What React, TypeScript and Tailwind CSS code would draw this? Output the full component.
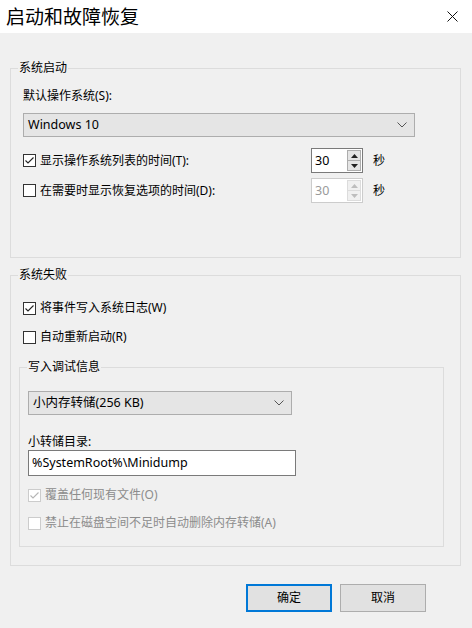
import React from 'react'

const font = { fontFamily: '"Noto Sans", "Noto Sans CJK SC", sans-serif' }

function CheckBox({ checked, disabled, label }: { checked?: boolean; disabled?: boolean; label: string }) {
  return (
    <div className="flex h-4 items-center">
      <div
        className={`flex h-[13px] w-[13px] items-center justify-center border bg-white ${
          disabled ? 'border-[#cccccc]' : 'border-[#333333]'
        }`}
      >
        {checked && (
          <svg width="11" height="11" viewBox="0 0 11 11">
            <polyline
              points="1.5,5.5 4,8 9.5,2.5"
              fill="none"
              stroke={disabled ? '#b5b5b5' : '#222222'}
              strokeWidth="1.1"
            />
          </svg>
        )}
      </div>
      <span className={`ml-[4px] text-[12px] leading-4 ${disabled ? 'text-[#8c8c8c]' : 'text-black'}`}>{label}</span>
    </div>
  )
}

function Select({ value, width }: { value: string; width: string }) {
  return (
    <div className={`flex h-[24px] items-center justify-between border border-[#adadad] bg-[#e5e5e5] pl-[4px] pr-[7px] ${width}`}>
      <span className="text-[12.5px] leading-4 text-black">{value}</span>
      <svg width="10" height="6" viewBox="0 0 10 6">
        <polyline points="0.5,0.5 5,5 9.5,0.5" fill="none" stroke="#555555" strokeWidth="1" />
      </svg>
    </div>
  )
}

function Spin({ disabled }: { disabled?: boolean }) {
  const c = disabled ? '#bdbdbd' : '#222222'
  return (
    <div
      className={`flex h-[25px] w-[52px] items-center justify-between border bg-white pl-[3px] pr-[1px] ${
        disabled ? 'border-[#cccccc] bg-[#f0f0f0]' : 'border-[#7a7a7a]'
      }`}
    >
      <span className={`text-[12.5px] leading-4 ${disabled ? 'text-[#9a9a9a]' : 'text-black'}`}>30</span>
      <div className="flex h-[21px] w-[14px] flex-col">
        <div className={`flex h-[11px] items-center justify-center border ${disabled ? 'border-[#dcdcdc] bg-[#f0f0f0]' : 'border-[#adadad] bg-[#e5e5e5]'}`}>
          <svg width="7" height="4" viewBox="0 0 7 4">
            <polygon points="3.5,0 7,4 0,4" fill={c} />
          </svg>
        </div>
        <div className={`-mt-px flex h-[11px] items-center justify-center border ${disabled ? 'border-[#dcdcdc] bg-[#f0f0f0]' : 'border-[#adadad] bg-[#e5e5e5]'}`}>
          <svg width="7" height="4" viewBox="0 0 7 4">
            <polygon points="0,0 7,0 3.5,4" fill={c} />
          </svg>
        </div>
      </div>
    </div>
  )
}

function TimeRow({ checked, disabled, label }: { checked?: boolean; disabled?: boolean; label: string }) {
  return (
    <div className="flex h-[25px] items-center">
      <div className="w-[288px]">
        <CheckBox checked={checked} label={label} />
      </div>
      <Spin disabled={disabled} />
      <span className="ml-[10px] text-[12px] leading-4 text-black">秒</span>
    </div>
  )
}

export default function App() {
  return (
    <div className="h-[628px] w-[472px] overflow-hidden bg-[#f0f0f0]" style={font}>
      {/* Title bar */}
      <div className="flex h-[33px] items-center justify-between bg-white pl-[6px] pr-[14px]">
        <span className="text-[19px] leading-6 text-black">启动和故障恢复</span>
        <svg width="11" height="11" viewBox="0 0 11 11">
          <path d="M0.5 0.5 L10.5 10.5 M10.5 0.5 L0.5 10.5" stroke="#111111" strokeWidth="1" />
        </svg>
      </div>

      {/* 系统启动 */}
      <fieldset className="mt-[27px] ml-[10px] w-[451px] border border-[#dcdcdc] pb-[54px]">
        <legend className="ml-[7px] px-[1px] text-[12px] leading-4 text-black">系统启动</legend>
        <div className="ml-[12px]">
          <div className="mt-[12px] text-[12px] leading-4 text-black">默认操作系统(S):</div>
          <div className="mt-[9px]">
            <Select value="Windows 10" width="w-[392px]" />
          </div>
          <div className="mt-[11px]">
            <TimeRow checked label="显示操作系统列表的时间(T):" />
          </div>
          <div className="mt-[5px]">
            <TimeRow disabled label="在需要时显示恢复选项的时间(D):" />
          </div>
        </div>
      </fieldset>

      {/* 系统失败 */}
      <fieldset className="mt-[9px] ml-[10px] w-[451px] border border-[#dcdcdc] pb-[18px]">
        <legend className="ml-[7px] px-[1px] text-[12px] leading-4 text-black">系统失败</legend>
        <div className="ml-[12px] mt-[17px]">
          <CheckBox checked label="将事件写入系统日志(W)" />
        </div>
        <div className="ml-[12px] mt-[13px]">
          <CheckBox label="自动重新启动(R)" />
        </div>

        <fieldset className="mt-[14px] ml-[8px] w-[425px] border border-[#dcdcdc] pb-[15px]">
          <legend className="ml-[7px] px-[1px] text-[12px] leading-4 text-black">写入调试信息</legend>
          <div className="ml-[8px]">
            <div className="mt-[16px]">
              <Select value="小内存转储(256 KB)" width="w-[264px]" />
            </div>
            <div className="mt-[19px] text-[12px] leading-4 text-black">小转储目录:</div>
            <div className="flex h-[26px] w-[268px] items-center border border-[#7a7a7a] bg-white pl-[3px]">
              <span className="text-[12.5px] leading-4 text-black">%SystemRoot%\Minidump</span>
            </div>
            <div className="mt-[11px]">
              <CheckBox checked disabled label="覆盖任何现有文件(O)" />
            </div>
            <div className="mt-[12px]">
              <CheckBox disabled label="禁止在磁盘空间不足时自动删除内存转储(A)" />
            </div>
          </div>
        </fieldset>
      </fieldset>

      {/* Buttons */}
      <div className="mt-[18px] flex justify-end gap-[8px] pr-[46px]">
        <button className="h-[28px] w-[86px] border-2 border-[#0078d7] bg-[#e1e1e1] text-[12px] text-black">确定</button>
        <button className="h-[28px] w-[86px] border border-[#adadad] bg-[#e1e1e1] text-[12px] text-black">取消</button>
      </div>
    </div>
  )
}
